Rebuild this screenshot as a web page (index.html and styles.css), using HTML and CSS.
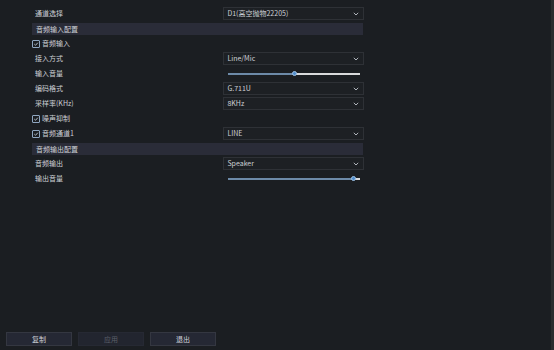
FILE: index.html
```html
<!DOCTYPE html>
<html>
<head>
<meta charset="utf-8">
<link rel="stylesheet" href="styles.css">
</head>
<body>
<div class="page">
<div class="form">
  <div class="row">
    <div class="label">通道选择</div>
    <div class="select"><span>D1(高空抛物22205)</span><svg class="chev" viewBox="0 0 6 4"><path d="M0.8 0.8 L3 3 L5.2 0.8" /></svg></div>
  </div>
  <div class="row"><div class="section">音频输入配置</div></div>
  <div class="row">
    <div class="label check"><span class="box"><svg viewBox="0 0 7 7"><path d="M1.5 3.6 L3 5 L5.6 2" /></svg></span>音频输入</div>
  </div>
  <div class="row">
    <div class="label">接入方式</div>
    <div class="select"><span>Line/Mic</span><svg class="chev" viewBox="0 0 6 4"><path d="M0.8 0.8 L3 3 L5.2 0.8" /></svg></div>
  </div>
  <div class="row">
    <div class="label">输入音量</div>
    <div class="slider"><div class="fill" style="width: 50%"></div><div class="thumb"></div><div class="rest"></div></div>
  </div>
  <div class="row">
    <div class="label">编码格式</div>
    <div class="select"><span>G.711U</span><svg class="chev" viewBox="0 0 6 4"><path d="M0.8 0.8 L3 3 L5.2 0.8" /></svg></div>
  </div>
  <div class="row">
    <div class="label">采样率(KHz)</div>
    <div class="select"><span>8KHz</span><svg class="chev" viewBox="0 0 6 4"><path d="M0.8 0.8 L3 3 L5.2 0.8" /></svg></div>
  </div>
  <div class="row">
    <div class="label check"><span class="box"><svg viewBox="0 0 7 7"><path d="M1.5 3.6 L3 5 L5.6 2" /></svg></span>噪声抑制</div>
  </div>
  <div class="row">
    <div class="label check"><span class="box"><svg viewBox="0 0 7 7"><path d="M1.5 3.6 L3 5 L5.6 2" /></svg></span>音频通道1</div>
    <div class="select"><span>LINE</span><svg class="chev" viewBox="0 0 6 4"><path d="M0.8 0.8 L3 3 L5.2 0.8" /></svg></div>
  </div>
  <div class="row"><div class="section">音频输出配置</div></div>
  <div class="row">
    <div class="label">音频输出</div>
    <div class="select"><span>Speaker</span><svg class="chev" viewBox="0 0 6 4"><path d="M0.8 0.8 L3 3 L5.2 0.8" /></svg></div>
  </div>
  <div class="row">
    <div class="label">输出音量</div>
    <div class="slider"><div class="fill" style="width: 95%"></div><div class="thumb"></div><div class="rest"></div></div>
  </div>
</div>

<div class="footer">
  <div class="btn">复制</div>
  <div class="btn disabled">应用</div>
  <div class="btn">退出</div>
</div>
</div>
</body>
</html>
```

FILE: styles.css
```css
body {
margin: 0;
background: #1b1e22;
font-family: "Noto Sans CJK SC", "Noto Sans", sans-serif;
color: #cdd0d6;
font-size: 7px;
overflow: hidden;
}

.page {
display: flex;
flex-direction: column;
height: 350px;
width: 551px;
border-right: 3px solid #2a2b2e;
}

.form {
display: flex;
flex-direction: column;
padding: 6px 0 0 32px;
width: 331px;
}

.row {
display: flex;
align-items: center;
height: 15px;
}

.label {
width: 189px;
padding-left: 3px;
line-height: 15px;
white-space: nowrap;
}

.label.check {
display: flex;
align-items: center;
gap: 2px;
padding-left: 0;
width: 192px;
}

.box {
width: 6px;
height: 6px;
border: 1px solid #8fa6c0;
border-radius: 1px;
display: flex;
}

.box svg {
width: 6px;
height: 6px;
fill: none;
stroke: #c6d2e0;
stroke-width: 1;
}

.section {
flex: 1;
height: 12px;
background: #2a2c38;
padding-left: 4px;
line-height: 12px;
}

.select {
width: 136px;
height: 11px;
border: 1px solid #2e3136;
background: #1d2024;
display: flex;
align-items: center;
justify-content: space-between;
padding: 0 0 0 3px;
box-sizing: content-box;
margin-right: -1px;
}

.select span {
line-height: 11px;
}

.chev {
width: 6px;
height: 4px;
margin-right: 4px;
fill: none;
stroke: #aeb3ba;
stroke-width: 1;
}

.slider {
display: flex;
align-items: center;
margin-left: 4px;
width: 132px;
height: 6px;
}

.fill {
height: 2px;
background: #6d8aa8;
}

.thumb {
width: 5px;
height: 5px;
border-radius: 50%;
background: #4f8ccc;
border: 1px solid #9ec1e4;
box-sizing: border-box;
margin: 0 -2px;
position: relative;
}

.rest {
flex: 1;
height: 2px;
background: #d9dadc;
}

.footer {
margin-top: auto;
display: flex;
gap: 6px;
padding: 0 0 4px 6px;
}

.btn {
width: 64px;
height: 12px;
border: 1px solid #343741;
background: #252834;
text-align: center;
line-height: 12px;
color: #d0d3da;
}

.btn.disabled {
color: #5a5e68;
border-color: #262933;
background: #22252f;
}
```
